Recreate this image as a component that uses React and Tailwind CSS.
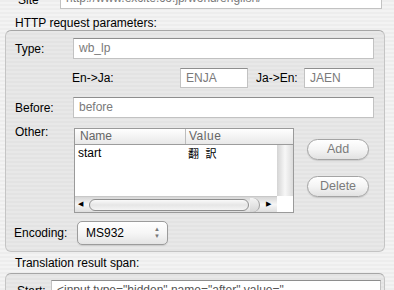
const stripes =
  "bg-[repeating-linear-gradient(0deg,#ededed_0px,#ededed_2px,#f3f3f3_2px,#f3f3f3_4px)]";
const boxStripes =
  "bg-[repeating-linear-gradient(0deg,#e3e3e3_0px,#e3e3e3_2px,#e8e8e8_2px,#e8e8e8_4px)]";

const Field = ({ value, className = "" }) => (
  <div
    className={`bg-white border border-[#c2c2c2] border-t-[#8e8e8e] text-[#7a7a7a] text-[12px] leading-[15px] pl-[5px] pt-[2px] overflow-hidden whitespace-nowrap ${className}`}
  >
    {value}
  </div>
);

const AquaButton = ({ label }) => (
  <button className="w-[62px] h-[21px] rounded-full border border-[#a4a4a4] bg-gradient-to-b from-[#ffffff] via-[#f4f4f4] to-[#e2e2e2] text-[12.5px] text-[#7b7b7b] shadow-[0_1px_1px_rgba(0,0,0,0.12)]">
    {label}
  </button>
);

const App = () => {
  return (
    <div
      className={`w-[394px] h-[290px] overflow-hidden ${stripes} text-[12px] text-black font-['Liberation_Sans',Arial,sans-serif]`}
    >
      {/* site row, cropped at the top */}
      <div className="h-[9px] overflow-hidden flex flex-col justify-end">
        <div className="flex items-center h-[22px] shrink-0">
          <span className="w-[60px] pl-[18px] text-[12px] pt-[3px]">Site</span>
          <Field
            value="http://www.excite.co.jp/world/english/"
            className="w-[322px] h-[22px] pt-[3px]"
          />
        </div>
      </div>

      <div className="pl-[15px] mt-[7px] leading-[15px]">HTTP request parameters:</div>

      <div
        className={`ml-[5px] mt-[-1px] w-[380px] h-[222px] rounded-[6px] border border-[#c4c4c4] border-t-[#a6a6a6] ${boxStripes} pt-[7px] pl-[9px]`}
      >
        {/* Type */}
        <div className="flex items-center h-[21px]">
          <span className="w-[58px]">Type:</span>
          <Field value="wb_lp" className="w-[301px] h-[21px]" />
        </div>

        {/* En->Ja / Ja->En */}
        <div className="flex items-center h-[20px] mt-[9px]">
          <span className="w-[57px]" />
          <span className="w-[108px]">En-&gt;Ja:</span>
          <Field value="ENJA" className="w-[68px] h-[20px]" />
          <span className="w-[56px] pl-[8px]">Ja-&gt;En:</span>
          <Field value="JAEN" className="w-[70px] h-[20px]" />
        </div>

        {/* Before */}
        <div className="flex items-center h-[21px] mt-[9px]">
          <span className="w-[58px]">Before:</span>
          <Field value="before" className="w-[301px] h-[21px]" />
        </div>

        {/* Other */}
        <div className="flex mt-[10px] h-[85px]">
          <span className="w-[59px] -mt-[3px] leading-[15px]">Other:</span>
          <div className="w-[220px] h-[85px] border border-[#9a9a9a] bg-white flex flex-col">
            <div className="flex h-[16px] shrink-0 bg-gradient-to-b from-[#ffffff] to-[#e8e8e8] border-b border-[#9c9c9c] text-[#666] leading-[15px]">
              <span className="w-[111px] pl-[5px] border-r border-[#bdbdbd]">Name</span>
              <span className="pl-[3px] tracking-[0.5px]">Value</span>
            </div>
            <div className="flex flex-1">
              <div className="flex-1 flex leading-[14px] pt-[1px]">
                <span className="w-[111px] pl-[3px]">start</span>
                <span className="pl-[2px] font-['Noto_Sans_CJK_JP',sans-serif] text-[11px] tracking-[2px]">
                  翻 訳
                </span>
              </div>
              <div className="w-[16px] bg-gradient-to-r from-[#d4d4d4] via-[#f7f7f7] to-[#dcdcdc]" />
            </div>
            <div className="flex h-[16px] shrink-0">
              <div className="flex-1 flex items-center bg-gradient-to-b from-[#d6d6d6] via-[#f6f6f6] to-[#dedede] border-t border-[#c8c8c8]">
                <span className="text-[7px] pl-[3px] w-[14px]">◀</span>
                <div className="w-[160px] h-[12px] rounded-full border border-[#8e8e8e] bg-gradient-to-b from-[#fafafa] via-[#e6e6e6] to-[#f4f4f4]" />
                <div className="w-[10px] h-[14px] ml-[1px] rounded-r-full border-r border-[#9a9a9a] bg-gradient-to-b from-[#f4f4f4] to-[#d6d6d6]" />
                <span className="text-[7px] pl-[6px]">▶</span>
              </div>
              <div className="w-[16px] bg-white" />
            </div>
          </div>
          <div className="flex flex-col pl-[13px] pt-[11px] gap-[16px]">
            <AquaButton label="Add" />
            <AquaButton label="Delete" />
          </div>
        </div>

        {/* Encoding */}
        <div className="flex items-center h-[24px] mt-[8px]">
          <span className="w-[63px] -ml-[1px]">Encoding:</span>
          <div className="w-[91px] h-[24px] rounded-[5px] border border-[#9c9c9c] bg-gradient-to-b from-[#ffffff] via-[#f6f6f6] to-[#e4e4e4] flex items-center shadow-[0_1px_1px_rgba(0,0,0,0.1)]">
            <span className="pl-[8px] flex-1">MS932</span>
            <span className="flex flex-col items-center pr-[7px] text-[6px] leading-[7px] text-[#777]">
              <span>▲</span>
              <span>▼</span>
            </span>
          </div>
        </div>
      </div>

      <div className="pl-[15px] mt-[4px] leading-[15px]">Translation result span:</div>

      <div
        className={`ml-[5px] mt-[2px] w-[380px] h-[40px] rounded-[6px] border border-[#c4c4c4] border-t-[#a6a6a6] ${boxStripes} pt-[6px] pl-[11px]`}
      >
        <div className="flex items-center h-[21px]">
          <span className="w-[34px]">Start:</span>
          <Field
            value={'<input type="hidden" name="after" value="'}
            className="w-[330px] h-[21px] text-[#555]"
          />
        </div>
      </div>
    </div>
  );
};

export default App;
